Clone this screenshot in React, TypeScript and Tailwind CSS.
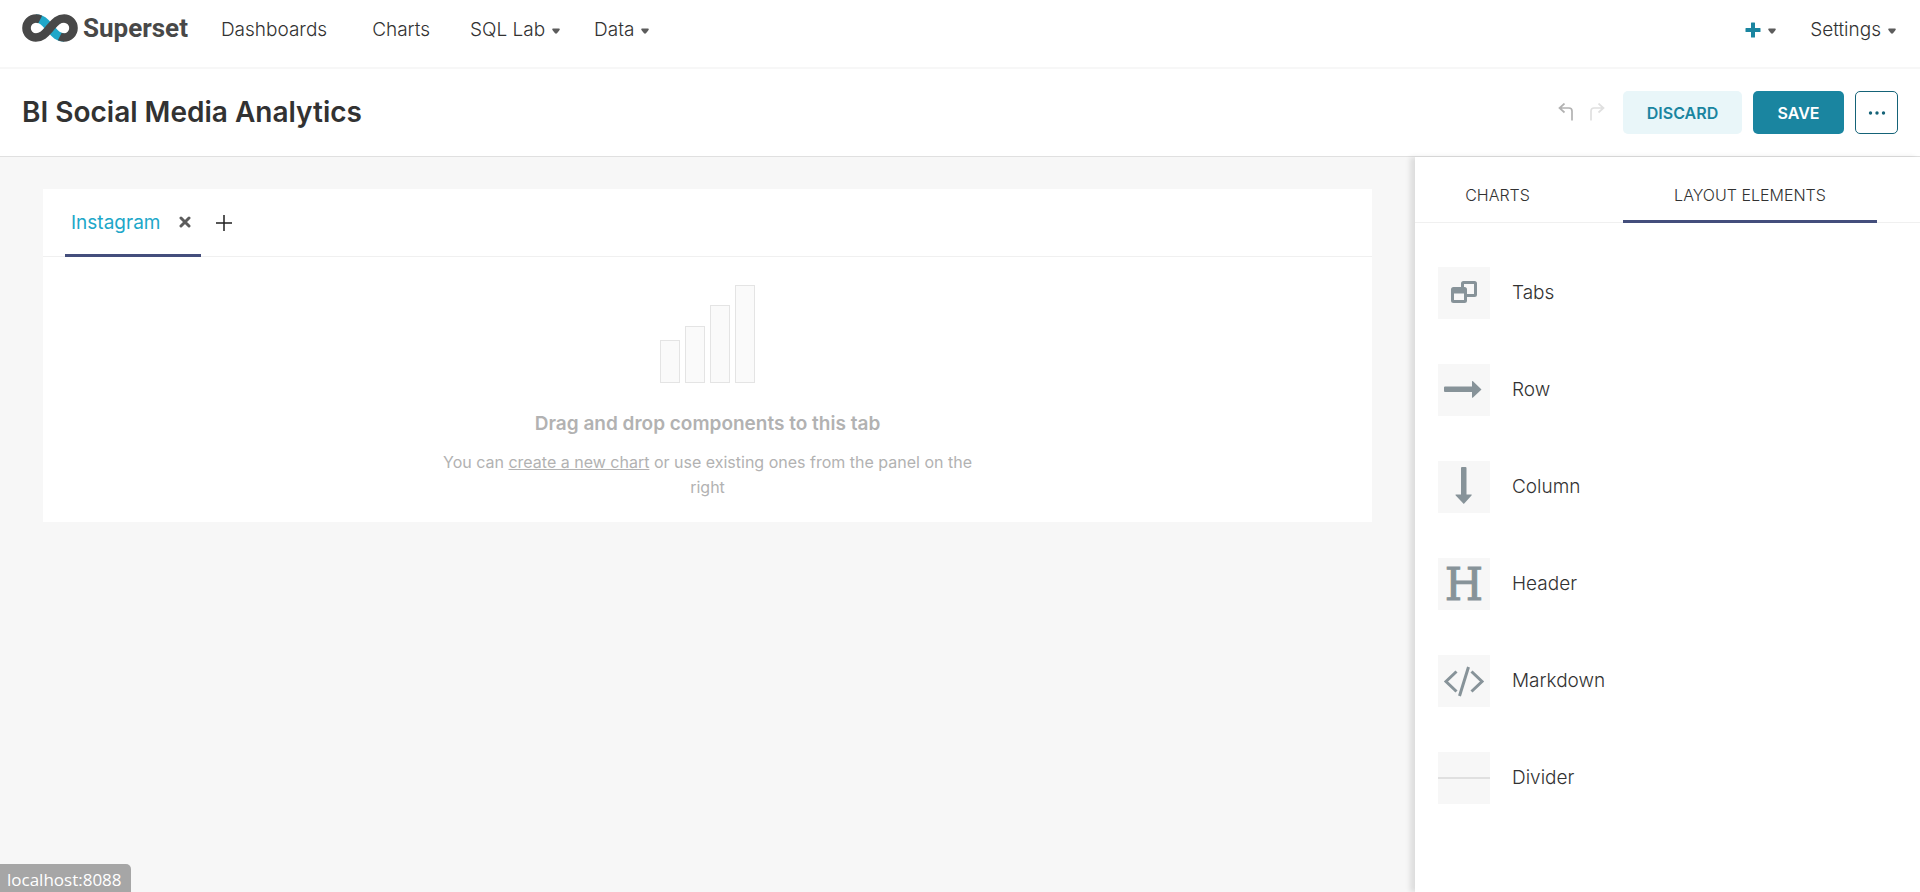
import type { ReactNode } from "react";

function Caret() {
  return (
    <svg viewBox="0 0 8 6" className="mt-[2px] h-[6px] w-[8px] fill-[#5c5c5c]" aria-hidden="true">
      <path d="M1 .5h6q.9.2.7 1.1l-.5 1L5 5.300q-1 .7-2 0L.8 2.600.3 1.600Q.1.700 1 .5Z" />
    </svg>
  );
}

function Logo() {
  return (
    <a href="#home" className="flex items-center gap-[5px]">
      <svg viewBox="0 0 56 28" className="h-7 w-14" fill="none" strokeWidth="8.600" aria-hidden="true">
        <path d="M14 4.500C20.500 4.500 23.500 9 28 14S35.500 23.500 42 23.500" stroke="#20a7c9" />
        <path d="M14 23.500a9.500 9.500 0 0 1 0-19q2.200 0 4.200 1" stroke="#484848" />
        <path d="M42 4.500a9.500 9.500 0 0 1 0 19q-2.200 0-4.200-1" stroke="#484848" />
        <path d="M13.900 23.500C20.500 23.500 23.500 19 28 14S35.500 4.500 42.100 4.500" stroke="#484848" />
      </svg>
      <span className="font-[Roboto] text-[26px] leading-7 font-bold text-[#484848]">Superset</span>
    </a>
  );
}

const glyph = "#879399";

const elements: { label: string; icon: ReactNode }[] = [
  {
    label: "Tabs",
    icon: (
      <svg viewBox="0 0 52 52" className="size-full" fill="none" stroke={glyph} strokeWidth="3">
        <rect x="24.500" y="15.500" width="13" height="13" rx="1" />
        <rect x="14.500" y="21.500" width="13" height="13" rx="1" fill="#f7f7f7" />
        <path d="M14 24h14" strokeWidth="5" />
      </svg>
    ),
  },
  {
    label: "Row",
    icon: (
      <svg viewBox="0 0 52 52" className="size-full" fill={glyph}>
        <path d="M7 22.500h27v-5q0-1 1-.2L43.500 25.500 35 33.500q-1 .8-1-.3v-5.200H7q-1 0-1-1v-3.500q0-1 1-1Z" />
      </svg>
    ),
  },
  {
    label: "Column",
    icon: (
      <svg viewBox="0 0 52 52" className="size-full" fill={glyph}>
        <path d="M24 6h3.500q1 0 1 1v26.500h4.700q1.200 0 .3 1L25.800 43 17.700 34.500q-.8-1 .3-1h5V7q0-1 1-1Z" />
      </svg>
    ),
  },
  {
    label: "Header",
    icon: (
      <span className="pt-[2px] font-['DejaVu_Serif',serif] text-[44px] leading-[50px] font-normal text-[#879399] [-webkit-text-stroke:1px_#879399]">
        H
      </span>
    ),
  },
  {
    label: "Markdown",
    icon: (
      <svg viewBox="0 0 52 52" className="size-full" fill="none" stroke={glyph} strokeWidth="3">
        <path d="M18.500 16.500 8 26.500l10.500 10M33.500 16.500 44 26.500l-10.500 10M30.500 12l-9 29" />
      </svg>
    ),
  },
  { label: "Divider", icon: <span className="h-[2px] w-full bg-[#e0e0e0]" /> },
];

export default function App() {
  return (
    <div className="flex min-h-screen flex-col bg-white font-[Inter,sans-serif] text-[#323232]">
      <nav className="flex h-[69px] items-center border-b-2 border-[#f7f7f7] pr-6 pb-[11px] pl-[22px] text-[19px] font-light">
        <Logo />
        <div className="ml-[33px] flex items-center pt-1">
          <a href="#dashboards">Dashboards</a>
          <a href="#charts" className="ml-[45px]">Charts</a>
          <button className="ml-10 flex items-center gap-[7px]">SQL Lab <Caret /></button>
          <button className="ml-[34px] flex items-center gap-[7px]">Data <Caret /></button>
        </div>
        <div className="ml-auto flex items-center gap-[34px] pt-1">
          <button aria-label="New" className="flex items-center gap-[7px]">
            <svg viewBox="0 0 16 16" className="size-4 fill-[#1a85a0]" aria-hidden="true">
              <path d="M6.500.5h3q.5 0 .5.500V6h5q.5 0 .5.500v3q0 .5-.5.500h-5v5q0 .5-.5.500h-3q-.5 0-.5-.5v-5H1q-.5 0-.5-.5v-3Q.5 6 1 6h5V1q0-.5.500-.5Z" />
            </svg>
            <Caret />
          </button>
          <button className="flex items-center gap-[7px]">Settings <Caret /></button>
        </div>
      </nav>

      <header className="flex h-[88px] items-center border-b border-[#e0e0e0] px-[22px]">
        <h1 className="pb-[2px] text-[28px] font-semibold">BI Social Media Analytics</h1>
        <div className="ml-auto flex items-center gap-[11px] text-base font-semibold">
          <div className="mr-[7px] flex gap-[15px]">
            <button aria-label="Undo" className="text-[#b2b2b2]">
              <svg viewBox="0 0 16 20" className="h-5 w-4" fill="none" stroke="currentColor" strokeWidth="1.700">
                <path d="M6.500.5 1.500 5l5 4.500M2 5h9q3 0 3 3v9.500" />
              </svg>
            </button>
            <button aria-label="Redo" className="text-[#e0e0e0]">
              <svg viewBox="0 0 16 20" className="h-5 w-4" fill="none" stroke="currentColor" strokeWidth="1.700">
                <path d="m9.500.5 5 4.500-5 4.500M14 5H5Q2 5 2 8v9.500" />
              </svg>
            </button>
          </div>
          <button className="h-[43px] w-[119px] rounded-[5px] bg-[#e9f6f9] text-[#1a85a0]">DISCARD</button>
          <button className="h-[43px] w-[91px] rounded-[5px] bg-[#1a85a0] text-white">SAVE</button>
          <button aria-label="More" className="flex size-[43px] items-center justify-center rounded-[5px] border border-[#156378]">
            <svg viewBox="0 0 18 4" className="h-1 w-[18px] fill-[#156378]" aria-hidden="true">
              <circle cx="2.500" cy="2" r="1.700" /><circle cx="9" cy="2" r="1.700" /><circle cx="15.500" cy="2" r="1.700" />
            </svg>
          </button>
        </div>
      </header>

      <div className="flex flex-1">
        <main className="flex-1 bg-[#f7f7f7] px-[43px] pt-8">
          <section className="bg-white">
            <div className="flex h-[68px] items-stretch border-b border-[#f0f0f0] pl-[22px]">
              <div className="-mb-px flex items-center gap-[19px] border-b-3 border-[#444e7c] pr-[10px] pl-[6px]">
                <button className="pt-[3px] text-[19px] text-[#20a7c9]">Instagram</button>
                <button aria-label="Close tab">
                  <svg viewBox="0 0 12 12" className="size-3" stroke="#5c5c5c" strokeWidth="3" strokeLinecap="round">
                    <path d="m2 2 8 8M10 2l-8 8" />
                  </svg>
                </button>
              </div>
              <button aria-label="Add tab" className="ml-[15px]">
                <svg viewBox="0 0 16 16" className="size-4" stroke="#1f1f1f" strokeWidth="1.500">
                  <path d="M8 0v16M0 8h16" />
                </svg>
              </button>
            </div>
            <div className="flex flex-col items-center pt-7 pb-[22px] text-center text-[#b2b2b2]">
              <svg viewBox="0 0 96 99" className="h-[99px] w-24" fill="#fafafa" stroke="#e4e4e4" aria-hidden="true">
                <rect x=".5" y="55.500" width="19" height="42" />
                <rect x="25.500" y="41.500" width="19" height="56" />
                <rect x="50.500" y="20.500" width="19" height="77" />
                <rect x="75.500" y=".5" width="19" height="97" />
              </svg>
              <p className="mt-[26px] text-[19px] leading-7 font-semibold">Drag and drop components to this tab</p>
              <p className="mt-3 max-w-[540px] text-base leading-[25px]">
                You can <a href="#new-chart" className="underline">create a new chart</a> or use existing ones from the panel on the right
              </p>
            </div>
          </section>
        </main>

        <aside className="w-[505px] bg-white shadow-[-5px_0_5px_rgba(0,0,0,0.1)]">
          <div className="flex h-[66px] gap-[43px] border-b border-[#f0f0f0] pr-[43px] text-base font-light">
            <button className="w-[165px] pt-[11px]">CHARTS</button>
            <button className="-mb-px flex-1 border-b-3 border-[#444e7c] pt-[13px]">LAYOUT ELEMENTS</button>
          </div>
          <ul className="pt-[21px] pl-[23px]">
            {elements.map(({ label, icon }) => (
              <li key={label} className="flex h-[97px] items-center gap-[22px] text-[19px] font-light">
                <span className="flex size-[52px] items-center justify-center bg-[#f7f7f7]">{icon}</span>
                <span className="pt-[2px]">{label}</span>
              </li>
            ))}
          </ul>
        </aside>
      </div>

      <div className="fixed bottom-0 left-0 h-7 rounded-tr-[5px] bg-[#a6a6a6] pr-[9px] pl-[7px] font-['Open_Sans',sans-serif] text-[17px] leading-8 text-white">
        localhost:8088
      </div>
    </div>
  );
}
